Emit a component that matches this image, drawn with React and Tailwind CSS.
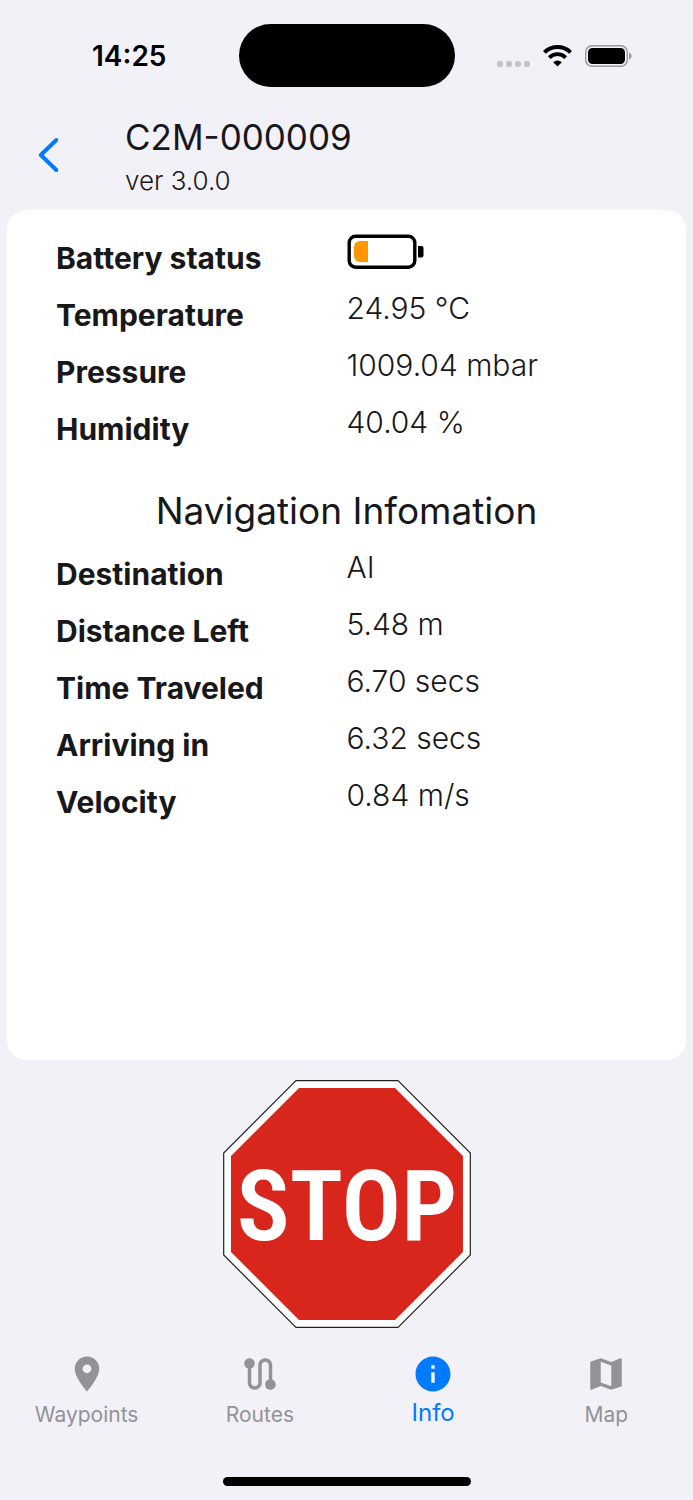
import { MdInfo, MdLocationOn, MdMap, MdRoute } from 'react-icons/md';

const statusRows = [
  { label: 'Battery status', battery: true },
  { label: 'Temperature', value: '24.95 °C' },
  { label: 'Pressure', value: '1009.04 mbar' },
  { label: 'Humidity', value: '40.04 %' },
];

const navigationRows = [
  { label: 'Destination', value: 'AI' },
  { label: 'Distance Left', value: '5.48 m' },
  { label: 'Time Traveled', value: '6.70 secs' },
  { label: 'Arriving in', value: '6.32 secs' },
  { label: 'Velocity', value: '0.84 m/s' },
];

const tabs = [
  { name: 'Waypoints', icon: MdLocationOn },
  { name: 'Routes', icon: MdRoute },
  { name: 'Info', icon: MdInfo, active: true },
  { name: 'Map', icon: MdMap },
];

function WifiIcon() {
  return (
    <svg width="29" height="22" viewBox="0 0 29 22" fill="none" aria-hidden="true">
      <path d="M1.4 7.4a18.6 18.6 0 0 1 26.2 0" stroke="black" strokeWidth="4" />
      <path d="M6.3 12.6a11.6 11.6 0 0 1 16.4 0" stroke="black" strokeWidth="3.8" />
      <path d="M14.5 21.5l-4.3-4.2a6.1 6.1 0 0 1 8.6 0z" fill="black" />
    </svg>
  );
}

function PhoneBatteryIcon() {
  return (
    <svg width="47" height="22" viewBox="0 0 47 22" fill="none" aria-hidden="true">
      <rect x="0.7" y="0.7" width="41.6" height="20.6" rx="6.5" stroke="#98979b" strokeWidth="1.4" />
      <rect x="3" y="3" width="37" height="16" rx="4.5" fill="black" />
      <path d="M44 7.5c1.6.6 2.6 2 2.6 3.5s-1 2.9-2.6 3.5z" fill="#98979b" />
    </svg>
  );
}

function BatteryLevel() {
  return (
    <svg width="78" height="35" viewBox="0 0 78 35" fill="none" role="img" aria-label="Battery low">
      <rect x="2.2" y="2.2" width="65.6" height="31" rx="6.5" stroke="black" strokeWidth="3.4" />
      <path d="M21 7v21h-8a6 6 0 0 1-6-6v-9a6 6 0 0 1 6-6z" fill="#ff9800" />
      <path d="M71 12h3.5a2 2 0 0 1 2 2v7.5a2 2 0 0 1-2 2H71z" fill="black" />
    </svg>
  );
}

function StatusBar() {
  return (
    <div className="grid grid-cols-[1fr_216px_1fr] items-center pt-6">
      <span className="pl-5 text-center text-[28px] leading-9 font-semibold text-black">14:25</span>
      <div className="h-[63px] rounded-full bg-black" />
      <div className="flex items-end justify-end gap-[13px] pr-[61px]">
        <div className="flex gap-[3px]">
          <span className="size-[6px] rounded-[2px] bg-[#c4c3c8]" />
          <span className="size-[6px] rounded-[2px] bg-[#c4c3c8]" />
          <span className="size-[6px] rounded-[2px] bg-[#c4c3c8]" />
          <span className="size-[6px] rounded-[2px] bg-[#c4c3c8]" />
        </div>
        <WifiIcon />
        <PhoneBatteryIcon />
      </div>
    </div>
  );
}

function InfoList({ rows }) {
  return (
    <dl className="space-y-4 text-[30px] leading-[34px]">
      {rows.map((row) => (
        <div key={row.label} className="grid grid-cols-2 items-start">
          <dt className="pt-[7px] font-bold">{row.label}</dt>
          <dd className="font-light">{row.battery ? <BatteryLevel /> : row.value}</dd>
        </div>
      ))}
    </dl>
  );
}

function StopButton() {
  return (
    <button type="button" aria-label="Stop" className="cursor-pointer">
      <svg width="248" height="248" viewBox="0 0 248 248" aria-hidden="true">
        <path d="M73 .7h102L247.3 73v102L175 247.3H73L.7 175V73z" fill="white" stroke="#222" strokeWidth="1.2" />
        <path d="M76 8h96l68 68v96l-68 68H76L8 172V76z" fill="#d9261c" />
        <text
          x="124"
          y="160"
          textAnchor="middle"
          fill="white"
          fontSize="99"
          fontWeight="600"
          fontFamily="'Roboto Condensed', 'Liberation Sans Narrow', 'Liberation Sans', sans-serif"
        >
          STOP
        </text>
      </svg>
    </button>
  );
}

function TabBar() {
  return (
    <nav className="grid grid-cols-4 border-t border-[#eeedf2] pt-3">
      {tabs.map(({ name, icon: Icon, active }) => (
        <a
          key={name}
          href={`#${name.toLowerCase()}`}
          aria-current={active ? 'page' : undefined}
          className={`flex h-[74px] flex-col items-center justify-between ${active ? 'text-[#007aff]' : 'text-[#929299]'}`}
        >
          <Icon size={42} />
          <span className={active ? 'text-[24px] leading-7' : 'text-[21px] leading-6'}>{name}</span>
        </a>
      ))}
    </nav>
  );
}

function App() {
  return (
    <div className="flex min-h-screen flex-col bg-[#f2f1f7] font-['Inter',sans-serif] text-[#18181b]">
      <StatusBar />

      <header className="flex items-center pt-[30px] pb-[13px] pl-[37px]">
        <button type="button" aria-label="Back" className="w-[88px] cursor-pointer pb-1">
          <svg width="24" height="36" viewBox="0 0 24 36" fill="none">
            <path d="M19.3 3L3.8 18l15.5 15" stroke="#007aff" strokeWidth="4" strokeLinecap="round" strokeLinejoin="round" />
          </svg>
        </button>
        <div>
          <h1 className="text-[35px] leading-10">C2M-000009</h1>
          <p className="pt-2 text-[26px] leading-8 font-light">ver 3.0.0</p>
        </div>
      </header>

      <main className="mx-[7px] flex-1 rounded-[20px] bg-white px-[49px] py-6">
        <InfoList rows={statusRows} />
        <h2 className="pt-10 pb-[14px] text-center text-[37px] leading-[50px] whitespace-nowrap">
          Navigation Infomation
        </h2>
        <InfoList rows={navigationRows} />
      </main>

      <div className="flex justify-center pt-5 pb-3">
        <StopButton />
      </div>

      <TabBar />
      <div className="flex justify-center pt-[50px] pb-[14px]">
        <div className="h-[9px] w-[248px] rounded-full bg-black" />
      </div>
    </div>
  );
}

export default App;
